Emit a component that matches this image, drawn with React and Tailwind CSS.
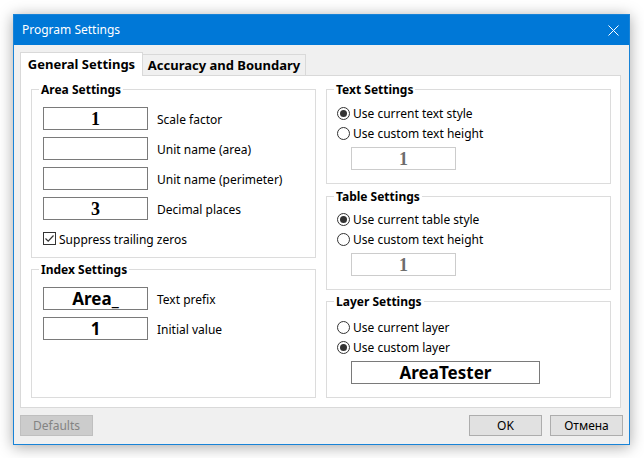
import React, { useState } from 'react'

const serif = "font-['Liberation_Serif',serif]"

function TextBox({ value, isSerif, disabled, className = 'w-[105px]' }) {
  return (
    <div
      className={`h-[23px] flex items-center justify-center bg-white border ${
        disabled ? 'border-[#cccccc] text-[#6d6d6d]' : 'border-[#7a7a7a] text-black'
      } ${className}`}
    >
      <span className={`font-bold leading-none ${isSerif ? `${serif} text-[18px]` : 'text-[17px]'}`}>
        {value}
      </span>
    </div>
  )
}

function Radio({ checked, label, onClick }) {
  return (
    <div className="h-[20px] flex items-center gap-[3px] cursor-default" onClick={onClick}>
      <div className="w-[13px] h-[13px] rounded-full border border-[#333333] bg-white flex items-center justify-center">
        {checked && <div className="w-[7px] h-[7px] rounded-full bg-[#333333]" />}
      </div>
      <span className="text-[12px] text-black pt-[2px]">{label}</span>
    </div>
  )
}

function Group({ title, className, children }) {
  return (
    <div className={`relative border border-[#dcdcdc] ${className}`}>
      <span className="absolute left-[7px] -top-[8px] bg-white px-[2px] text-[12px] font-bold leading-[16px] text-black">
        {title}
      </span>
      {children}
    </div>
  )
}

function Field({ value, isSerif, label }) {
  return (
    <div className="flex items-center gap-[9px]">
      <TextBox value={value} isSerif={isSerif} />
      <span className="text-[12px] text-black pt-[2px]">{label}</span>
    </div>
  )
}

function Button({ children, disabled }) {
  return (
    <button
      className={`w-[73px] h-[21px] border text-[12px] leading-none ${
        disabled ? 'bg-[#cccccc] border-[#bfbfbf] text-[#838383]' : 'bg-[#e1e1e1] border-[#adadad] text-black'
      }`}
    >
      {children}
    </button>
  )
}

export default function App() {
  const [textMode, setTextMode] = useState('current')
  const [tableMode, setTableMode] = useState('current')
  const [layerMode, setLayerMode] = useState('custom')

  return (
    <div className="w-[644px] h-[458px] bg-white pt-[14px] pl-[13px] font-['Noto_Sans',sans-serif]">
      <div className="w-[617px] h-[431px] border border-[#1883d7] bg-[#f0f0f0] flex flex-col shadow-[0_2px_14px_rgba(0,0,0,0.35)]">
        {/* title bar */}
        <div className="h-[30px] bg-[#0078d7] flex items-center justify-between pl-[8px] pr-[10px]">
          <span className="text-[12px] text-white">Program Settings</span>
          <svg width="11" height="11" viewBox="0 0 11 11">
            <path d="M0.5 0.5 L10.5 10.5 M10.5 0.5 L0.5 10.5" stroke="white" strokeWidth="1" />
          </svg>
        </div>

        <div className="flex-1 px-[6px] pt-[7px] flex flex-col">
          {/* tabs */}
          <div className="flex items-end h-[23px]">
            <div className="relative z-10 -mb-px h-[24px] w-[123px] bg-white border border-b-0 border-[#d9d9d9] flex items-center justify-center text-[13px] font-bold text-black">
              General Settings
            </div>
            <div className="-ml-px h-[21px] w-[164px] bg-[#f0f0f0] border border-b-0 border-[#d9d9d9] flex items-center justify-center pt-[2px] text-[13px] font-bold text-black">
              Accuracy and Boundary
            </div>
          </div>

          {/* panel */}
          <div className="w-[601px] h-[333px] bg-white border border-[#d9d9d9] pt-[13px] pl-[10px] flex gap-[10px]">
            <div className="w-[285px] flex flex-col gap-[11px]">
              <Group title="Area Settings" className="h-[169px] pt-[17px] pl-[11px]">
                <div className="flex flex-col gap-[7px]">
                  <Field value="1" isSerif label="Scale factor" />
                  <Field value="" label="Unit name (area)" />
                  <Field value="" label="Unit name (perimeter)" />
                  <Field value="3" isSerif label="Decimal places" />
                </div>
                <div className="mt-[12px] h-[13px] flex items-center gap-[3px]">
                  <div className="w-[13px] h-[13px] border border-[#333333] bg-white flex items-center justify-center">
                    <svg width="11" height="11" viewBox="0 0 11 11">
                      <path d="M1.5 5.5 L4.2 8.2 L9.5 2.5" fill="none" stroke="#333333" strokeWidth="1.2" />
                    </svg>
                  </div>
                  <span className="text-[12px] leading-[13px] text-black pt-[2px]">Suppress trailing zeros</span>
                </div>
              </Group>
              <Group title="Index Settings" className="h-[129px] pt-[17px] pl-[11px]">
                <div className="flex flex-col gap-[7px]">
                  <Field value="Area_" label="Text prefix" />
                  <Field value="1" label="Initial value" />
                </div>
              </Group>
            </div>

            <div className="w-[285px] flex flex-col">
              <Group title="Text Settings" className="h-[95px] pt-[13px] pl-[10px]">
                <Radio checked={textMode === 'current'} label="Use current text style" onClick={() => setTextMode('current')} />
                <Radio checked={textMode === 'custom'} label="Use custom text height" onClick={() => setTextMode('custom')} />
                <TextBox value="1" isSerif disabled className="w-[105px] mt-[4px] ml-[14px]" />
              </Group>
              <Group title="Table Settings" className="mt-[12px] h-[94px] pt-[12px] pl-[10px]">
                <Radio checked={tableMode === 'current'} label="Use current table style" onClick={() => setTableMode('current')} />
                <Radio checked={tableMode === 'custom'} label="Use custom text height" onClick={() => setTableMode('custom')} />
                <TextBox value="1" isSerif disabled className="w-[105px] mt-[4px] ml-[14px]" />
              </Group>
              <Group title="Layer Settings" className="mt-[11px] h-[97px] pt-[15px] pl-[10px]">
                <Radio checked={layerMode === 'current'} label="Use current layer" onClick={() => setLayerMode('current')} />
                <Radio checked={layerMode === 'custom'} label="Use custom layer" onClick={() => setLayerMode('custom')} />
                <TextBox value="AreaTester" className="w-[189px] mt-[4px] ml-[14px]" />
              </Group>
            </div>
          </div>

          {/* buttons */}
          <div className="mt-[7px] flex items-center">
            <Button disabled>Defaults</Button>
            <div className="ml-auto flex gap-[8px]">
              <Button>OK</Button>
              <Button>Отмена</Button>
            </div>
          </div>
        </div>
      </div>
    </div>
  )
}
